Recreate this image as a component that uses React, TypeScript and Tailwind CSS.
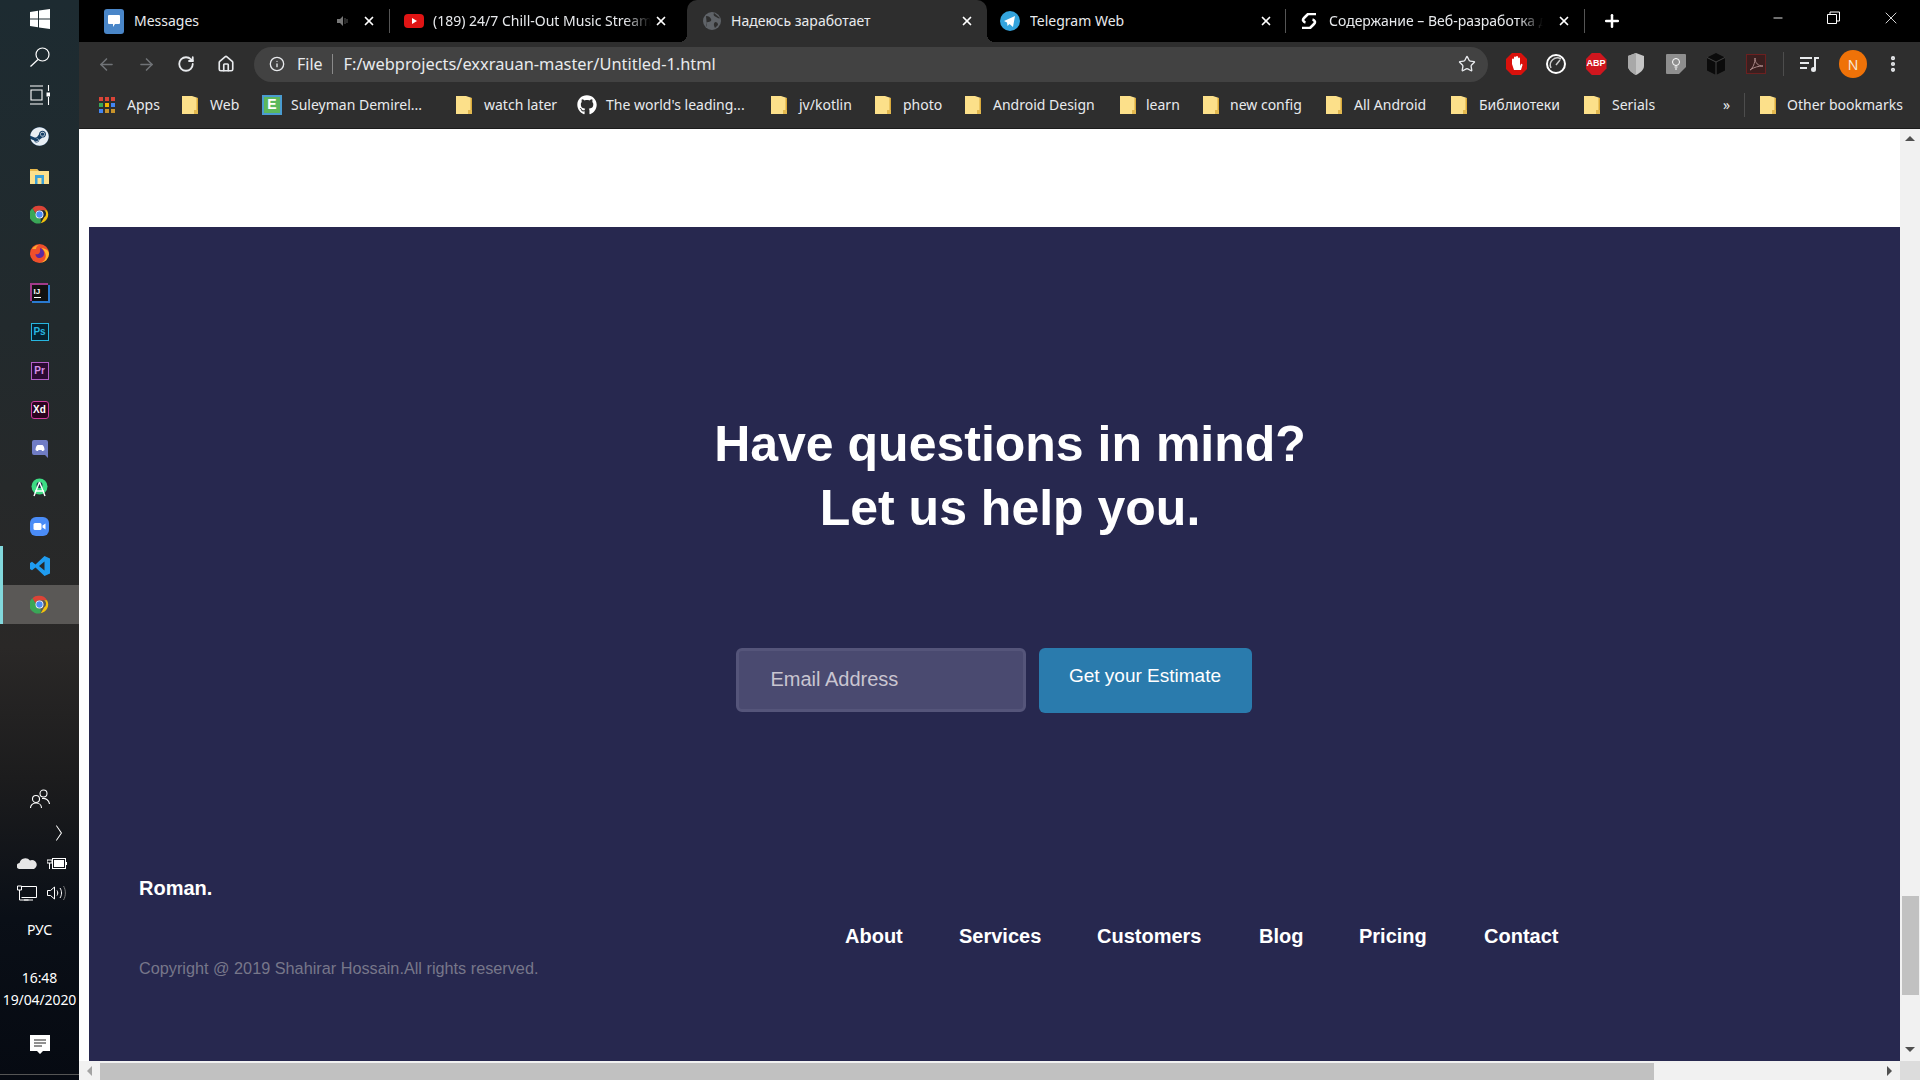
import React from "react";
import { ArrowLeft, ArrowRight, RotateCw, Home, Info, Star, X, Plus, Minus, MoreVertical, ChevronRight } from "lucide-react";
import { FaGithub, FaSteam } from "react-icons/fa";

const ui = "font-['Noto_Sans','Open_Sans',sans-serif]";

function Chrome({ size = 19 }: { size?: number }) {
  return (
    <svg width={size} height={size} viewBox="0 0 48 48">
      <path d="M24 2a22 22 0 0 1 19 11H24a11 11 0 0 0-10.500 7.500L6 8A22 22 0 0 1 24 2z" fill="#db4437" />
      <path d="M43 13a22 22 0 0 1-16 32.800L36 31a11 11 0 0 0 0-18z" fill="#f4c20d" />
      <path d="M6 8l8.500 14A11 11 0 0 0 27 34.500L27 45.800A22 22 0 0 1 6 8z" fill="#3aa757" />
      <circle cx="24" cy="24" r="10" fill="#fff" />
      <circle cx="24" cy="24" r="8" fill="#4b8bf5" />
    </svg>
  );
}

function Folder() {
  return (
    <svg width="16" height="18" viewBox="0 0 16 18" className="shrink-0">
      <path d="M0 0h10l6 2v16H0z" fill="#fce08a" />
      <path d="M14.500 2H16v16h-1.500z" fill="#d9a93a" />
      <path d="M12 14h4v4h-4z" fill="#e3b94f" />
    </svg>
  );
}

function Slot({ children, active, indicator }: { children: React.ReactNode; active?: boolean; indicator?: boolean }) {
  return (
    <div className={`flex h-[39px] w-full items-center justify-center ${active ? "bg-[#5a5856]" : ""} ${indicator ? "border-l-[3px] border-[#82d8dc] pr-[3px]" : ""}`}>
      {children}
    </div>
  );
}

function AppBox({ text, cls, rounded }: { text: string; cls: string; rounded?: boolean }) {
  return (
    <div className={`flex h-[18px] w-[18px] items-center justify-center border font-['Liberation_Sans',sans-serif] text-[10px] leading-none font-bold ${cls} ${rounded ? "rounded-[3px]" : ""}`}>
      {text}
    </div>
  );
}

function Taskbar() {
  return (
    <aside className="flex h-full w-[79px] shrink-0 flex-col items-center bg-[linear-gradient(180deg,#1d2b31_0%,#222a2d_30%,#2a2827_60%,#1c1c1d_72%,#0a0f17_85%,#060a12_100%)] text-white">
      <div className="flex h-[38px] w-full items-center justify-center">
        <svg width="20" height="20" viewBox="0 0 20 20" fill="#fff"><path d="M0 3l8-1.200V9.500H0zM9 1.600L20 0v9.500H9zM0 10.500h8v7.700L0 17zM9 10.500h11V20L9 18.400z" /></svg>
      </div>
      <div className="flex h-[38px] w-full items-center justify-center">
        <svg width="20" height="20" viewBox="0 0 20 20" fill="none" stroke="#fff" strokeWidth="1.200"><circle cx="12.500" cy="7.500" r="6.500" /><path d="M8 12.500L0.500 19.500" /></svg>
      </div>
      <div className="flex h-[38px] w-full items-center justify-center">
        <svg width="20" height="20" viewBox="0 0 20 20" fill="none" stroke="#fff" strokeWidth="1.100"><path d="M0 1h13M0 19h13M1 5h11v10H1zM18.500 0v6M18.500 12v8" /><path d="M16.500 7.500h4v4h-4z" fill="#fff" stroke="none" /></svg>
      </div>
      <div className="h-[3px]" />
      <Slot>
        <div className="flex h-[19px] w-[19px] items-center justify-center rounded-full bg-[#153f66]"><FaSteam size={19} color="#e8eef4" /></div>
      </Slot>
      <Slot>
        <svg width="19" height="17" viewBox="0 0 19 17"><path d="M0 2h7l2 2h10v13H0z" fill="#fbe08c" /><path d="M0 2h7l1 2H0z" fill="#e8b84b" /><path d="M5 8h9v9h-2.500v-6h-4v6H5z" fill="#3aa0d8" /></svg>
      </Slot>
      <Slot><Chrome /></Slot>
      <Slot>
        <svg width="19" height="19" viewBox="0 0 19 19">
          <circle cx="9.500" cy="9.500" r="9.500" fill="#ef4f2b" />
          <path d="M19 9.500a9.500 9.500 0 0 1-9.500 9.500c5 -1 7-5 6-9-.5-2.500-2-4.500-4-6 4 .5 7.500 2.500 7.500 5.500z" fill="#ffb62e" />
          <path d="M10 4c3 1 4.500 3.500 4 6.500-.5 2.500-3 4-5.500 3.500-2-.5-3-2-3-4 1 .5 3 .5 4-1C10.500 7.500 10 5.500 10 4z" fill="#5a2aa0" />
          <path d="M2 5c1-2 4-4 7-4-2 1-3 2-3 4z" fill="#ffa52e" />
        </svg>
      </Slot>
      <Slot>
        <div className="flex h-[16px] w-[16px] flex-col justify-center bg-[#111] pl-[2px] font-['Liberation_Sans',sans-serif] text-[8px] leading-[8px] font-bold text-white shadow-[-1px_-1px_0_1px_#a23a8a,1px_1px_0_1px_#2a7ad0]">
          <span>IJ</span>
          <span className="mt-[1px] h-[1px] w-[7px] bg-white" />
        </div>
      </Slot>
      <Slot><AppBox text="Ps" cls="border-[#27b6e0] bg-[#06222f] text-[#27b6e0]" /></Slot>
      <Slot><AppBox text="Pr" cls="border-[#b35fc9] bg-[#2a0a33] text-[#d490e6]" /></Slot>
      <Slot><AppBox text="Xd" cls="border-[#d23c9f] bg-[#2b0320] text-white" rounded /></Slot>
      <Slot>
        <svg width="16" height="18" viewBox="0 0 16 18"><path d="M2 0h12a2 2 0 0 1 2 2v16l-3-3H2a2 2 0 0 1-2-2V2a2 2 0 0 1 2-2z" fill="#6f7cc4" /><path d="M3.500 10c0-2.500 1-4.500 2-5h5c1 .5 2 2.500 2 5-1 1-2 1.200-2.500 1l-.5-1H6.500l-.5 1c-.5.200-1.500 0-2.500-1z" fill="#fff" /></svg>
      </Slot>
      <Slot>
        <svg width="19" height="19" viewBox="0 0 19 19"><circle cx="9.500" cy="8.500" r="8" fill="#3ddc84" /><circle cx="9.500" cy="7" r="3" fill="#103" opacity=".8" /><path d="M9.500 4L4 18M9.500 4L15 18M5 13h9" stroke="#fff" strokeWidth="1.400" fill="none" /></svg>
      </Slot>
      <Slot>
        <svg width="19" height="19" viewBox="0 0 19 19"><rect width="19" height="19" rx="6" fill="#4a8cf7" /><rect x="3.500" y="6" width="8" height="7" rx="1.500" fill="#fff" /><path d="M12.500 8.500l3-2v6l-3-2z" fill="#fff" /></svg>
      </Slot>
      <Slot indicator>
        <svg width="20" height="20" viewBox="0 0 20 20"><path d="M14.500 0L20 2.500v15L14.500 20 5.500 11.500 2 14.300 0 13V7l2-1.300L5.500 8.500zM14.500 5.500L9 10l5.500 4.500z" fill="#1f9cf0" /></svg>
      </Slot>
      <Slot active indicator><Chrome /></Slot>
      <div className="flex-1" />
      <div className="flex h-[28px] w-full items-center justify-center">
        <svg width="20" height="20" viewBox="0 0 20 20" fill="none" stroke="#fff" strokeWidth="1.100"><circle cx="6" cy="10" r="3.500" /><path d="M0.500 19c0-3 2.500-5 5.500-5s5.500 2 5.500 5" /><circle cx="13.500" cy="4.500" r="3.500" /><path d="M12 9.500c3.500-.5 7 1.500 7.500 5.500" /></svg>
      </div>
      <div className="mt-[6px] flex h-[28px] w-full items-center justify-center pl-[38px]">
        <ChevronRight size={26} strokeWidth={1} color="#fff" className="scale-x-75 scale-y-110" />
      </div>
      <div className="mt-[1px] flex h-[30px] w-full items-center justify-center gap-[10px] pl-[5px]">
        <svg width="20" height="12" viewBox="0 0 20 12"><path d="M3 12a3 3 0 0 1-.5-6A6 6 0 0 1 13 3.500 4.500 4.500 0 0 1 17 12z" fill="#e6e6e6" /></svg>
        <svg width="20" height="13" viewBox="0 0 20 13" fill="none" stroke="#fff"><rect x="5.500" y="1.500" width="13" height="10" /><rect x="7" y="3" width="10" height="7" fill="#fff" stroke="none" /><path d="M0 3h5v3H0zM2.500 6v6M19.500 5v3" /></svg>
      </div>
      <div className="flex h-[30px] w-full items-center justify-center gap-[10px] pl-[5px]">
        <svg width="20" height="16" viewBox="0 0 20 16" fill="none" stroke="#fff"><path d="M4.500 1.500h15v11h-15M0.500 1h4v4h-4zM2.500 5v10h9M7 15h9" /></svg>
        <svg width="20" height="16" viewBox="0 0 20 16" fill="none" stroke="#fff"><path d="M0.500 5.500h3l4-3.500v12l-4-3.500h-3zM10 5.500c1 1.500 1 3.500 0 5M13 3c2 3 2 7 0 10" /><path d="M16.500 1c2.500 4 2.500 10 0 14" stroke="#777" /></svg>
      </div>
      <div className={`mt-[12px] h-[20px] text-[14px] leading-[20px] ${ui}`}>РУС</div>
      <div className={`mt-[27px] text-center text-[14px] leading-[22px] tracking-[-0.1px] whitespace-nowrap ${ui}`}>
        <div>16:48</div>
        <div>19/04/2020</div>
      </div>
      <div className="mt-[24px] mb-[19px] flex h-[20px] items-center">
        <svg width="20" height="20" viewBox="0 0 20 20"><path d="M0 0h20v16h-7l-3 3-3-3H0z" fill="#fff" /><path d="M4 5h12M4 8h12M4 11h8" stroke="#222" /></svg>
      </div>
      <div className="mb-[5px] h-px w-full bg-[#555]" />
    </aside>
  );
}

function Sep() {
  return <span className="h-[24px] w-px shrink-0 bg-[#555]" />;
}

function CloseX() {
  return <X size={14} strokeWidth={3} color="#fff" className="shrink-0" />;
}

function TabTitle({ w, children, fade }: { w: string; children: React.ReactNode; fade?: boolean }) {
  return (
    <span className={`${w} overflow-hidden text-[14px] leading-[20px] whitespace-nowrap text-[#e8eaed] ${fade ? "[mask-image:linear-gradient(90deg,#000_88%,transparent)]" : ""} ${ui}`}>
      {children}
    </span>
  );
}

function TabBar() {
  return (
    <div className="flex h-[42px] shrink-0 items-center bg-black">
      <div className="flex h-full w-[310px] items-center pl-[25px]">
        <div className="flex h-[25px] w-[20px] items-center justify-center rounded-[3px] bg-[#4a86c8]">
          <svg width="14" height="14" viewBox="0 0 14 14"><path d="M2 1h10a1 1 0 0 1 1 1v7a1 1 0 0 1-1 1H8l-2 3v-3H2a1 1 0 0 1-1-1V2a1 1 0 0 1 1-1z" fill="#fff" /></svg>
        </div>
        <span className="ml-[10px] flex"><TabTitle w="w-[200px]">Messages</TabTitle></span>
        <svg width="12" height="12" viewBox="0 0 12 12" className="ml-[2px]"><path d="M1 4h3l3-3v10L4 8H1z" fill="#777" /><path d="M9 3v6M11 4v4" stroke="#555" /></svg>
        <span className="ml-[14px] flex"><CloseX /></span>
      </div>
      <Sep />
      <div className="flex h-full w-[297px] items-center pl-[14px]">
        <div className="flex h-[14px] w-[20px] items-center justify-center rounded-[4px] bg-[#e01414]">
          <span className="h-0 w-0 border-y-[3px] border-l-[5px] border-y-transparent border-l-white" />
        </div>
        <span className="ml-[9px] flex"><TabTitle w="w-[218px]" fade>(189) 24/7 Chill-Out Music Stream</TabTitle></span>
        <span className="ml-[3px] flex"><CloseX /></span>
      </div>
      <div className="relative flex h-full w-[300px] items-center rounded-t-[10px] bg-[#2e2e2e] pl-[16px]">
        <span className="absolute bottom-0 left-[-8px] h-[8px] w-[8px] bg-[radial-gradient(circle_at_0_0,transparent_8px,#2e2e2e_8px)]" />
        <span className="absolute right-[-8px] bottom-0 h-[8px] w-[8px] bg-[radial-gradient(circle_at_100%_0,transparent_8px,#2e2e2e_8px)]" />
        <svg width="18" height="18" viewBox="0 0 18 18"><circle cx="9" cy="9" r="9" fill="#5f6368" /><path d="M3 4c3 0 4 1 5 3s-1 3-3 3-2 3-1 5M11 1c-1 2 0 3 2 4s3 2 4 1M12 10c2 0 3 1 3 3l-3 3c-1-2-2-4 0-6z" fill="#2e2e2e" /></svg>
        <span className="ml-[10px] flex"><TabTitle w="w-[224px]">Надеюсь заработает</TabTitle></span>
        <span className="ml-[5px] flex"><CloseX /></span>
      </div>
      <div className="flex h-full w-[298px] items-center pl-[13px]">
        <svg width="20" height="20" viewBox="0 0 20 20"><circle cx="10" cy="10" r="10" fill="#34a4dd" /><path d="M4 10l11-5-2 11-3.500-3-2 2-.5-3.500z" fill="#fff" /></svg>
        <span className="ml-[10px] flex"><TabTitle w="w-[225px]">Telegram Web</TabTitle></span>
        <span className="ml-[4px] flex"><CloseX /></span>
      </div>
      <Sep />
      <div className="flex h-full w-[298px] items-center pl-[15px]">
        <svg width="16" height="16" viewBox="0 0 16 16" fill="none" stroke="#fff" strokeWidth="2.600"><path d="M15 1L7 1 3 5c-2 2-.5 4 1.500 4.500M1 15L9 15l4-4c2-2 .5-4-1.500-4.500" /></svg>
        <span className="ml-[12px] flex"><TabTitle w="w-[214px]" fade>Содержание – Веб-разработка для</TabTitle></span>
        <span className="ml-[14px] flex"><CloseX /></span>
      </div>
      <Sep />
      <Plus size={20} strokeWidth={3} color="#fff" className="ml-[17px]" />
      <div className="flex-1" />
      <Minus size={14} strokeWidth={1.500} color="#fff" className="mb-[6px]" />
      <svg width="13" height="14" viewBox="0 0 13 14" fill="none" stroke="#fff" className="mr-[2px] mb-[6px] ml-[42px]"><path d="M0.500 3.500h9v9h-9zM3 3.500V1h9.500v9H9.500" /></svg>
      <X size={20} strokeWidth={1} color="#fff" className="mr-[19px] mb-[6px] ml-[39px]" />
    </div>
  );
}

function Ext({ children, ml }: { children: React.ReactNode; ml: string }) {
  return <div className={`flex h-[24px] w-[24px] shrink-0 items-center justify-center ${ml}`}>{children}</div>;
}

function Toolbar() {
  return (
    <div className="flex h-[45px] shrink-0 items-center bg-[#2e2e2e] pb-[1px] pl-[18px] text-[#e8eaed]">
      <ArrowLeft size={19} color="#707377" strokeWidth={2} />
      <ArrowRight size={19} color="#707377" strokeWidth={2} className="ml-[21px]" />
      <RotateCw size={18} color="#e8eaed" strokeWidth={2.400} className="ml-[21px]" />
      <Home size={18} color="#e8eaed" strokeWidth={2.200} className="ml-[22px]" />
      <div className="ml-[19px] flex h-[35px] w-[1234px] shrink-0 items-center rounded-full bg-[#424242] pl-[15px]">
        <Info size={16} color="#e8eaed" strokeWidth={2} />
        <span className={`ml-[12px] text-[16px] leading-[20px] ${ui}`}>File</span>
        <span className="ml-[9px] h-[20px] w-px bg-[#8a8a8a]" />
        <span className={`ml-[11px] text-[16.4px] leading-[20px] ${ui}`}>F:/webprojects/exxrauan-master/Untitled-1.html</span>
        <div className="flex-1" />
        <Star size={18} color="#e8eaed" strokeWidth={1.800} className="mr-[12px]" />
      </div>
      <Ext ml="ml-[16px]">
        <svg width="21" height="24" viewBox="0 0 21 24"><path d="M6 1h9l6 6v10l-6 6H6L0 17V7z" fill="#d9110c" /><path d="M6 12V7.500a1 1 0 0 1 2 0V11V5.500a1 1 0 0 1 2 0V11V5a1 1 0 0 1 2 0v6V6.500a1 1 0 0 1 2 0V14l1-2a1 1 0 0 1 1.500 1L15 18H8z" fill="#fff" /></svg>
      </Ext>
      <Ext ml="ml-[16px]">
        <svg width="20" height="20" viewBox="0 0 20 20" fill="none" stroke="#fff"><circle cx="10" cy="10" r="9" strokeWidth="2" /><path d="M5 14a7 7 0 0 1 10-9M10 11l4-5" strokeWidth="1.500" stroke="#ccc" /></svg>
      </Ext>
      <Ext ml="ml-[16px]">
        <div className="flex h-[22px] w-[21px] items-center justify-center bg-[#d0161e] font-['Liberation_Sans',sans-serif] text-[9px] font-bold text-white [clip-path:polygon(30%_0,70%_0,100%_30%,100%_70%,70%_100%,30%_100%,0_70%,0_30%)]">ABP</div>
      </Ext>
      <Ext ml="ml-[16px]">
        <svg width="16" height="22" viewBox="0 0 16 22"><path d="M8 0l8 3v10c0 4-4 7-8 9-4-2-8-5-8-9V3z" fill="#c5c5c5" /><path d="M8 0v22c-4-2-8-5-8-9V3z" fill="#a8a8a8" /></svg>
      </Ext>
      <Ext ml="ml-[16px]">
        <svg width="20" height="20" viewBox="0 0 20 20"><path d="M1 0h18a1 1 0 0 1 1 1v12l-7 7H1a1 1 0 0 1-1-1V1a1 1 0 0 1 1-1z" fill="#8e8e8e" /><circle cx="10" cy="8" r="3.500" fill="none" stroke="#fff" /><path d="M8.500 13h3M9 15h2" stroke="#fff" /></svg>
      </Ext>
      <Ext ml="ml-[16px]">
        <svg width="20" height="22" viewBox="0 0 20 22"><path d="M10 0l9 4.500v13L10 22l-9-4.500v-13z" fill="#0b0b0b" /><path d="M1 4.500l9 4.500 9-4.500M10 9v13" stroke="#444" fill="none" /></svg>
      </Ext>
      <Ext ml="ml-[16px]">
        <svg width="20" height="20" viewBox="0 0 20 20" fill="none"><rect x="0.500" y="0.500" width="19" height="19" fill="#3a1f1f" stroke="#6b2020" /><path d="M4 16c3-2 5-7 5-12 0 5 3 8 8 8-4 0-9 1-13 4z" stroke="#a88" strokeWidth="1" /></svg>
      </Ext>
      <span className="ml-[15px] h-[24px] w-px shrink-0 bg-[#4d4d4d]" />
      <Ext ml="ml-[14px]">
        <svg width="20" height="16" viewBox="0 0 20 16" fill="none" stroke="#e8eaed" strokeWidth="2"><path d="M0 2h12M0 7h9M0 12h7M15 14V2h4" /><circle cx="13.500" cy="13.500" r="1.500" fill="#e8eaed" /></svg>
      </Ext>
      <div className={`ml-[17px] flex h-[28px] w-[28px] shrink-0 items-center justify-center rounded-full bg-[#ef7208] text-[14px] text-[#f5e8da] ${ui}`}>N</div>
      <MoreVertical size={20} strokeWidth={3} color="#e8eaed" className="ml-[16px]" />
    </div>
  );
}

function Mark({ icon, label, w, gap }: { icon: React.ReactNode; label: string; w: string; gap: string }) {
  return (
    <div className={`flex h-full shrink-0 items-center ${w}`}>
      {icon}
      <span className={`${gap} text-[14px] leading-[18px] whitespace-nowrap text-[#e8eaed] ${ui}`}>{label}</span>
    </div>
  );
}

function BookmarkBar() {
  return (
    <div className="flex h-[42px] shrink-0 items-center border-b border-[#1c1c1c] bg-[#2e2e2e] pb-[6px] pl-[20px]">
      <Mark w="w-[83px]" gap="ml-[12px]" label="Apps" icon={
        <svg width="16" height="16" viewBox="0 0 16 16" className="shrink-0">
          <path d="M0 0h4v4H0zM6 0h4v4H6zM12 0h4v4h-4z" fill="#db4437" />
          <path d="M0 6h4v4H0z" fill="#3aa757" /><path d="M6 6h4v4H6z" fill="#f4b400" /><path d="M12 6h4v4h-4z" fill="#4285f4" />
          <path d="M0 12h4v4H0z" fill="#4285f4" /><path d="M6 12h4v4H6zM12 12h4v4h-4z" fill="#c9932a" />
        </svg>
      } />
      <Mark w="w-[80px]" gap="ml-[12px]" label="Web" icon={<Folder />} />
      <Mark w="w-[194px]" gap="ml-[9px]" label="Suleyman Demirel..." icon={
        <div className="flex h-[20px] w-[20px] shrink-0 items-center justify-center border-2 border-[#4a9cd0] bg-[#5cb85c] font-['Liberation_Sans',sans-serif] text-[14px] font-bold text-white">E</div>
      } />
      <Mark w="w-[121px]" gap="ml-[12px]" label="watch later" icon={<Folder />} />
      <Mark w="w-[194px]" gap="ml-[9px]" label="The world's leading..." icon={<FaGithub size={20} color="#fff" className="shrink-0" />} />
      <Mark w="w-[104px]" gap="ml-[12px]" label="jv/kotlin" icon={<Folder />} />
      <Mark w="w-[90px]" gap="ml-[12px]" label="photo" icon={<Folder />} />
      <Mark w="w-[155px]" gap="ml-[12px]" label="Android Design" icon={<Folder />} />
      <Mark w="w-[83px]" gap="ml-[10px]" label="learn" icon={<Folder />} />
      <Mark w="w-[123px]" gap="ml-[11px]" label="new config" icon={<Folder />} />
      <Mark w="w-[125px]" gap="ml-[12px]" label="All Android" icon={<Folder />} />
      <Mark w="w-[133px]" gap="ml-[12px]" label="Библиотеки" icon={<Folder />} />
      <Mark w="w-[139px]" gap="ml-[12px]" label="Serials" icon={<Folder />} />
      <span className={`w-[21px] shrink-0 text-[14px] text-[#e8eaed] ${ui}`}>»</span>
      <span className="h-[24px] w-px shrink-0 bg-[#4d4d4d]" />
      <div className="ml-[15px]">
        <Mark w="w-[150px]" gap="ml-[11px]" label="Other bookmarks" icon={<Folder />} />
      </div>
    </div>
  );
}

function Page() {
  const nav = [
    { t: "About", w: "w-[114px]" },
    { t: "Services", w: "w-[138px]" },
    { t: "Customers", w: "w-[162px]" },
    { t: "Blog", w: "w-[100px]" },
    { t: "Pricing", w: "w-[125px]" },
    { t: "Contact", w: "w-[80px]" },
  ];
  return (
    <div className="min-h-0 min-w-0 flex-1 bg-white pt-[98px] pl-[10px]">
      <section className="h-[834px] bg-[#27284f] font-['Liberation_Sans',sans-serif] text-white">
        <h2 className="pt-[185px] pl-[31px] text-center text-[50px] leading-[64px] font-bold">
          Have questions in mind?<br />Let us help you.
        </h2>
        <form className="mt-[108px] flex justify-center gap-[13px] pr-[2px]">
          <div className="flex h-[64px] w-[290px] items-center rounded-[6px] border-[3px] border-[#55557a] bg-[#4a4a70] pb-[2px] pl-[32px] text-[20px] text-[#c9c5d0]">
            Email Address
          </div>
          <button type="button" className="h-[65px] w-[213px] rounded-[6px] bg-[#2a7bad] pb-[8px] text-[19px] text-white">
            Get your Estimate
          </button>
        </form>
        <footer className="mt-[163px] flex pl-[50px]">
          <div className="w-[706px]">
            <div className="text-[20px] leading-[24px] font-bold">Roman.</div>
            <div className="mt-[59px] text-[16.25px] leading-[18px] text-[#77778a]">Copyright @ 2019 Shahirar Hossain.All rights reserved.</div>
          </div>
          <nav className="mt-[48px] flex text-[20px] leading-[24px] font-bold">
            {nav.map((n) => (
              <span key={n.t} className={n.w}>{n.t}</span>
            ))}
          </nav>
        </footer>
      </section>
    </div>
  );
}

function VScroll() {
  return (
    <div className="flex w-[20px] shrink-0 flex-col items-center bg-[#f1f1f1]">
      <span className="mt-[7px] h-0 w-0 border-x-[5px] border-b-[5px] border-x-transparent border-b-[#505050]" />
      <div className="flex-1" />
      <div className="mr-[-1px] h-[99px] w-[17px] bg-[#c1c1c1]" />
      <div className="h-[52px]" />
      <span className="mb-[9px] h-0 w-0 border-x-[5px] border-t-[5px] border-x-transparent border-t-[#505050]" />
    </div>
  );
}

function HScroll() {
  return (
    <div className="flex h-[19px] shrink-0 items-center bg-[#f1f1f1]">
      <span className="ml-[8px] h-0 w-0 border-y-[5px] border-r-[5px] border-y-transparent border-r-[#a3a3a3]" />
      <div className="ml-[8px] h-[17px] w-[1554px] self-end bg-[#c1c1c1]" />
      <div className="flex-1" />
      <span className="mr-[8px] h-0 w-0 border-y-[5px] border-l-[5px] border-y-transparent border-l-[#505050]" />
      <div className="h-full w-[20px] bg-[#dcdcdc]" />
    </div>
  );
}

export default function App() {
  return (
    <div className="flex h-[1080px] w-[1920px] overflow-hidden bg-white">
      <Taskbar />
      <main className="flex min-w-0 flex-1 flex-col">
        <TabBar />
        <Toolbar />
        <BookmarkBar />
        <div className="flex min-h-0 flex-1">
          <Page />
          <VScroll />
        </div>
        <HScroll />
      </main>
    </div>
  );
}
